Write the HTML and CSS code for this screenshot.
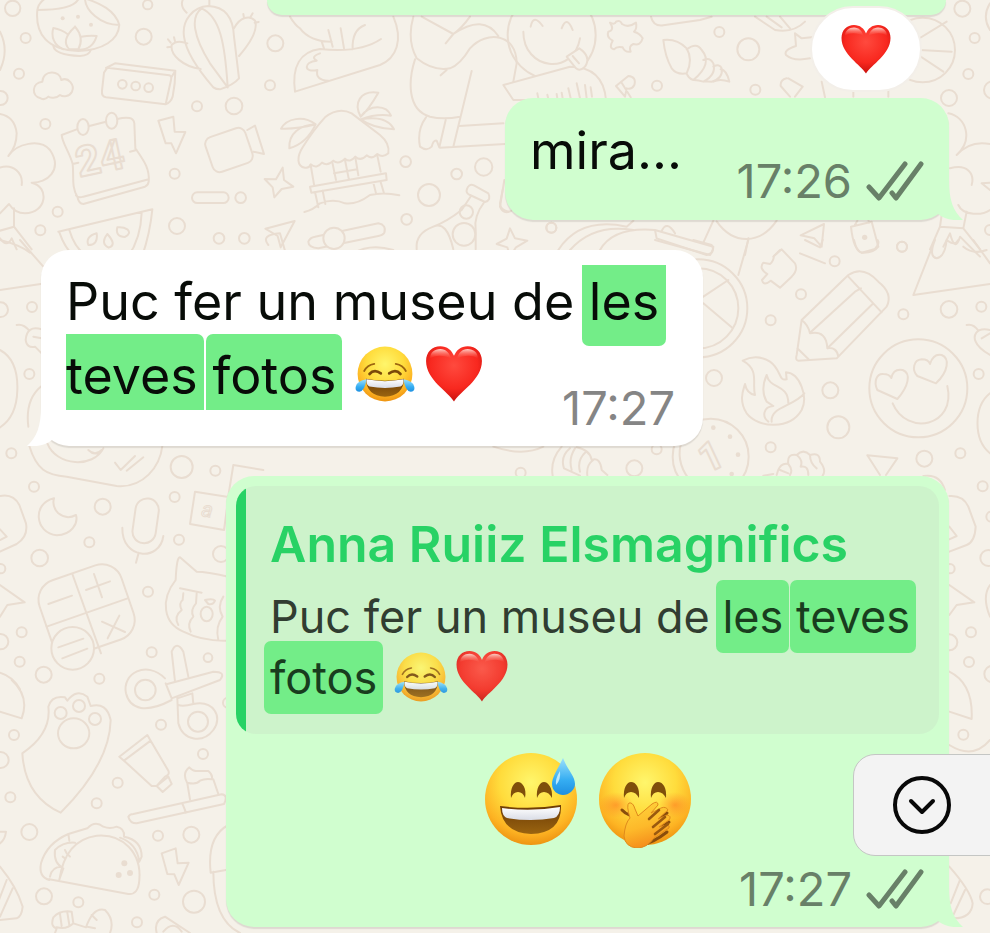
FILE: index.html
```html
<!DOCTYPE html>
<html lang="ca">
<head>
<meta charset="utf-8">
<meta name="viewport" content="width=device-width, initial-scale=1">
<title>Xat</title>
<link rel="stylesheet" href="styles.css">
</head>
<body>
<svg class="defs" aria-hidden="true">
  <defs>
    <radialGradient id="face" cx=".5" cy=".32" r=".68">
      <stop offset="0" stop-color="#fff66c"/><stop offset=".5" stop-color="#ffdc3c"/><stop offset=".82" stop-color="#fdb323"/><stop offset="1" stop-color="#ee9412"/>
    </radialGradient>
    <linearGradient id="mouth" x1="0" y1="0" x2="0" y2="1">
      <stop offset="0" stop-color="#6b3a05"/><stop offset="1" stop-color="#9a6410"/>
    </linearGradient>
    <linearGradient id="teeth" x1="0" y1="0" x2="0" y2="1">
      <stop offset="0" stop-color="#ffffff"/><stop offset="1" stop-color="#d9dce6"/>
    </linearGradient>
    <linearGradient id="drop" x1="0" y1="0" x2="0" y2="1">
      <stop offset="0" stop-color="#9be0fb"/><stop offset=".6" stop-color="#35adf2"/><stop offset="1" stop-color="#1e8fe0"/>
    </linearGradient>
    <radialGradient id="red" cx=".5" cy=".35" r=".65">
      <stop offset="0" stop-color="#ff4a3e"/><stop offset=".65" stop-color="#f8281f"/><stop offset="1" stop-color="#c8110d"/>
    </radialGradient>
    <linearGradient id="gloss" x1="0" y1="0" x2="0" y2="1">
      <stop offset="0" stop-color="#ffd9d2" stop-opacity=".95"/><stop offset="1" stop-color="#ff6a5a" stop-opacity="0"/>
    </linearGradient>
    <radialGradient id="blush"><stop offset="0" stop-color="#ff6a1e" stop-opacity=".5"/><stop offset="1" stop-color="#ff7a2a" stop-opacity="0"/></radialGradient>
    <linearGradient id="hand" x1="0" y1="0" x2=".3" y2="1">
      <stop offset="0" stop-color="#ffd63e"/><stop offset=".6" stop-color="#fdb92a"/><stop offset="1" stop-color="#f58f1c"/>
    </linearGradient>
    <symbol id="heart" viewBox="0 0 100 100">
      <path fill="url(#red)" d="M50 99C40 82 1 61 1 28C1 12 12 2 26 2C38 2 46 9 50 19C54 9 62 2 74 2C88 2 99 12 99 28C99 61 60 82 50 99Z"/>
      <path fill="url(#gloss)" d="M8 24C8 13 16 7 26 7C36 7 42 14 45 24C36 18 16 16 8 24ZM55 24C58 14 64 7 74 7C84 7 92 13 92 24C84 16 64 18 55 24Z"/>
    </symbol>
    <symbol id="joy" viewBox="0 0 100 94">
      <circle cx="50" cy="47" r="46" fill="url(#face)"/>
      <path d="M15 42Q20 32 32 30M85 42Q80 32 68 30" fill="none" stroke="#9c6510" stroke-width="3" stroke-linecap="round"/>
      <path d="M24 47Q32 38 43 46M57 46Q68 38 76 47" fill="none" stroke="#7b4a0a" stroke-width="4.5" stroke-linecap="round"/>
      <path fill="url(#mouth)" d="M18 55Q50 62 82 55Q81 84 50 85Q19 84 18 55Z"/>
      <path fill="url(#teeth)" d="M19 56Q50 62 81 56Q82 66 76 68Q50 73 24 68Q18 66 19 56Z"/>
      <path fill="url(#drop)" d="M19 56Q4 58 1 68Q-1 76 7 77Q16 76 19 56ZM81 56Q96 58 99 68Q101 76 93 77Q84 76 81 56Z"/>
    </symbol>
    <symbol id="sweat" viewBox="0 0 92 95">
      <circle cx="46" cy="46" r="46" fill="url(#face)"/>
      <path fill="#7f4f0b" d="M26 45C25 35 29 29 33 29C37 29 42 35 40 45Q38 39 33 39Q28 39 26 45ZM52 45C51 35 55 29 59 29C63 29 68 35 67 45Q64 39 59 39Q54 39 52 45Z"/>
      <path fill="url(#mouth)" d="M15 53Q46 57 76 52Q77 80 46 81Q17 80 15 53Z"/>
      <path fill="url(#teeth)" d="M17 55Q46 59 75 54Q75 63 69 65Q46 69 22 65Q17 63 17 55Z"/>
      <path fill="url(#drop)" d="M78 5C73 16 67 24 67 31C67 38 73 42 78 42C84 42 90 37 90 31C90 23 82 16 78 5Z"/>
      <path fill="#d8f5ff" opacity=".8" d="M75 18Q70 26 71 32Q76 27 75 18Z"/>
    </symbol>
    <symbol id="giggle" viewBox="0 0 92 95">
      <circle cx="46" cy="46" r="46" fill="url(#face)"/>
      <ellipse cx="17" cy="52" rx="17" ry="13" fill="url(#blush)"/><ellipse cx="76" cy="52" rx="16" ry="13" fill="url(#blush)"/>
      <path fill="#7f4f0b" d="M25 45C24 35 28 29 32 29C37 29 41 35 40 45Q37 39 32 39Q27 39 25 45ZM52 45C51 35 55 29 59 29C64 29 68 35 67 45Q64 39 59 39Q54 39 52 45Z"/>
      <path d="M23 57Q30 65 47 64M42 92Q54 90 68 79M68 60L54 72M70 69L54 80" stroke="#8a4d0c" stroke-width="3" stroke-linecap="round" fill="none"/>
      <path fill="url(#hand)" stroke="#e08a1c" stroke-width="1" d="M30 50Q34 49 36 56L39 63L53 51Q59 47 59 52L52 60L62 55Q67 53 69 57L59 66L68 62Q73 63 70 67L60 74Q72 70 70 75L55 85Q48 95 38 95Q26 94 25 83Q26 70 31 65Q27 52 30 50Z"/>
      <path d="M50 66L60 57M54 74L66 64M56 81L69 71" stroke="#9a590f" stroke-width="2.6" stroke-linecap="round"/>
    </symbol>
    <symbol id="ticks" viewBox="0 0 58 40">
      <path d="M3 26L13 37L39 3M26 32L30 37L55 3" fill="none" stroke="currentColor" stroke-width="5" stroke-linecap="round" stroke-linejoin="round"/>
    </symbol>
    <symbol id="tail" viewBox="0 0 30 40">
      <path d="M16 0C16 20 20 31 30 40C20 41 11 39 5 34L0 30V0Z" fill="currentColor"/>
    </symbol>
  </defs>
</svg>

<main class="chat">
  <svg class="wallpaper" viewBox="0 0 990 933" preserveAspectRatio="xMinYMin slice" aria-hidden="true">
    <!-- top left -->
    <g transform="scale(.33333)">
      <circle cx="38" cy="25" r="23"/><circle cx="77" cy="114" r="15"/><circle cx="57" cy="221" r="15"/><circle cx="443" cy="14" r="14"/><circle cx="431" cy="110" r="24"/><circle cx="826" cy="130" r="24"/><circle cx="810" cy="256" r="15"/><circle cx="591" cy="319" r="15"/><circle cx="702" cy="318" r="25"/><circle cx="136" cy="372" r="15"/><circle cx="524" cy="521" r="15"/><circle cx="173" cy="635" r="15"/><circle cx="121" cy="691" r="15"/><circle cx="531" cy="678" r="24"/><circle cx="657" cy="715" r="16"/><circle cx="733" cy="715" r="16"/><circle cx="722" cy="593" r="16"/><circle cx="2" cy="294" r="21"/>
      <path d="M0 95Q28 150 0 210"/>
      <path d="M112 30C105 100 140 150 235 153C310 150 355 120 358 75C345 30 300 10 255 -5C255 30 300 75 358 75M112 30C160 30 220 25 235 -2M112 30Q115 10 135 -4"/>
      <path d="M160 84C152 110 162 135 190 148M160 84Q185 88 205 104M225 80C195 108 190 130 208 148H235C250 120 238 95 225 80M243 110Q270 106 290 108C282 135 265 150 235 149M160 138Q165 165 240 168Q268 166 272 150"/>
      <circle class="dot" cx="188" cy="55" r="6"/><circle class="dot" cx="234" cy="50" r="6"/><circle class="dot" cx="273" cy="74" r="6"/>
      <path d="M122 295C93 288 95 248 127 245C130 208 180 210 184 240C205 230 225 255 216 275C208 290 190 292 180 285C170 295 150 295 145 290C138 298 128 298 122 295Z"/>
      <path d="M322 203L508 226Q516 228 513 240L497 313L318 292Q304 290 306 272L312 218ZM318 204L345 190L526 212L515 230M526 212Q526 250 518 290Q512 308 497 313"/>
      <circle cx="367" cy="253" r="13"/><circle cx="407" cy="258" r="13"/><circle cx="446" cy="263" r="13"/>
      <path d="M640 262Q560 170 552 110C545 60 580 20 625 18C680 20 700 60 702 110L717 235Q700 255 660 268Q648 268 640 262ZM605 25C570 50 580 110 630 190L683 262M605 25C660 50 675 130 683 262M562 130Q530 118 515 135C510 165 550 200 602 207M702 85C720 50 750 45 765 62C775 90 750 130 717 168M512 128L504 118M525 124L522 112M513 140L502 142M732 54L730 42M752 50L758 40M764 68L776 66M560 38Q540 20 548 0M628 0V18"/>
      <path d="M185 405L230 388M268 378L318 365M352 357Q400 345 403 370L406 445C430 480 450 505 446 545Q445 555 435 560L250 612Q236 612 232 590C214 560 222 530 218 492C208 455 187 430 185 405M228 586Q235 595 250 590L446 538M218 492L235 488M390 455L410 450"/>
      <ellipse cx="249" cy="381" rx="17" ry="24"/><ellipse cx="335" cy="362" rx="17" ry="24"/>
      <text class="day" x="238" y="532" transform="rotate(-12 238 532)">24</text>
      <path d="M475 362L520 350L524 395L556 396L528 460L514 430L497 430Z"/>
      <rect x="624" y="395" width="126" height="110" rx="22" transform="rotate(-19 687 450)"/>
      <path d="M742 390L765 377L792 462L760 455"/>
      <rect x="576" y="577" width="110" height="32" rx="16"/>
      <path d="M848 503L852 540L880 560L845 567L823 592L818 562L794 537L828 538Z"/>
      <path d="M0 342Q45 350 50 400Q50 440 25 468C50 430 120 415 150 450C190 510 140 550 95 548C150 560 140 640 75 640Q45 640 27 612L0 640M0 503C40 490 70 520 65 555M42 625V680L0 692M42 680L95 748M0 715Q20 745 35 715L50 748"/>
      <path d="M175 695L457 628Q450 700 426 770M178 697Q200 760 240 780M208 690Q225 750 270 775M425 638Q422 720 380 775M290 700Q255 710 265 735Q295 735 290 700ZM322 702Q300 730 326 743Q352 735 322 702ZM352 682Q345 710 375 711Q395 700 382 688Q370 680 352 682Z"/>
      <path d="M796 686L884 663L842 742L833 708Z"/>
    </g>
    <!-- upper middle -->
    <g transform="translate(270) scale(.33333)">
      <circle cx="477" cy="585" r="33"/><circle cx="407" cy="485" r="16"/><circle cx="560" cy="522" r="16"/><circle cx="641" cy="501" r="26"/><circle cx="410" cy="658" r="16"/><circle cx="844" cy="683" r="15"/>
      <path d="M60 50Q75 75 90 85Q120 125 185 125M155 125L162 145M175 90L188 140M212 85L222 145M285 75Q245 90 248 148M75 275C65 200 90 155 150 147Q270 160 333 117M75 275L330 195C380 175 400 120 370 50M150 160Q120 170 140 182C100 185 100 220 142 210Q135 240 175 242"/>
      <path d="M105 503C80 500 80 470 98 442Q130 390 165 352Q205 320 245 340L330 405Q360 430 355 460Q338 475 322 462Q305 480 290 466Q272 485 256 470Q240 490 225 476Q205 495 190 482Q172 500 156 488Q140 508 122 493Q118 505 105 503Z"/>
      <path d="M137 373C100 345 50 355 33 386Q80 388 137 373C90 375 55 400 58 445Q110 430 137 373M272 350C250 310 270 270 325 278Q295 330 272 350C300 310 350 315 363 347Q320 340 272 358C320 350 355 355 372 388Q310 385 272 358M122 495L132 553M187 487L198 540M225 480L236 535M256 472L265 526M322 467L332 515M192 520L262 508M120 560L348 520L350 540L124 578ZM135 576L145 622M158 572L166 612M310 548L318 580M332 546L342 580M103 636Q130 630 150 610Q190 595 225 610Q260 615 300 585Q340 575 388 586"/>
      <path d="M430 50Q410 120 440 175Q490 215 540 205Q570 195 600 145C650 90 740 100 740 190L730 245M455 50L550 102L527 130M600 50Q575 85 550 102Q640 40 685 108M435 178C415 240 410 330 480 350Q520 360 570 350M605 213L550 440M568 378L700 370M510 443L705 432M527 360L508 442L500 422Q490 420 485 440Q470 455 450 440Q440 390 468 352M512 226L530 210"/>
      <path d="M590 570Q595 550 612 556L655 580Q665 600 645 606L600 585Q588 580 590 570ZM603 588L575 630Q530 665 490 680Q435 700 440 748M643 606Q610 650 617 690V748M490 680Q530 660 550 748"/><circle cx="589" cy="636" r="20"/><circle cx="582" cy="703" r="34"/>
      <path d="M720 685L735 715L772 722L738 742L720 770L712 742L680 732L710 716ZM703 540L690 620Q700 645 725 632"/>
      <path d="M135 710L325 670Q350 675 343 698Q340 705 325 708L145 745Q115 742 115 725Q120 712 135 710ZM250 760Q300 730 370 750"/><circle class="paper" cx="192" cy="715" r="32"/>
      <path d="M-5 735Q-30 705 30 700L50 770"/>
    </g>
    <!-- top right -->
    <g transform="translate(500) scale(.33333)">
      <circle cx="155" cy="105" r="132"/>
      <path class="paper" d="M20 270L10 255L210 200Q310 200 318 300H40Z"/>
      <path d="M92 80Q100 40 128 78M185 85Q200 45 218 90M70 95C70 210 220 230 240 115"/>
      <path class="paper" d="M200 170L238 145Q275 170 255 200Q240 215 228 205Z"/>
      <path d="M218 168L237 190M115 295L112 280M145 297L142 284M172 295L170 282M188 295L185 278M212 295L205 265M240 295L230 250M260 295L255 255M276 290L272 262"/>
      <path d="M330 68Q345 75 348 65Q360 58 366 72Q385 85 408 68Q412 85 402 95Q420 100 428 115Q422 138 400 132Q385 138 392 155Q375 158 368 142Q350 138 342 148Q325 145 338 122Q318 112 325 95Q345 90 330 68Z"/>
      <path d="M453 50Q460 80 490 76L600 60L635 50M490 120Q495 170 515 205Q530 225 560 220Q580 180 560 145Q530 115 490 120ZM560 148Q590 125 605 150Q640 190 580 240Q565 235 560 220M610 180Q630 170 640 190Q650 225 610 245Q595 240 582 240M640 200Q660 190 665 205Q670 235 635 245L612 244M662 208Q680 210 688 245Q660 235 640 245"/>
      <circle cx="658" cy="96" r="15"/><circle cx="745" cy="148" r="33"/><circle cx="471" cy="257" r="15"/><circle cx="766" cy="269" r="15"/><circle cx="1387" cy="26" r="24"/><circle cx="1424" cy="114" r="15"/><circle cx="1405" cy="222" r="15"/><circle cx="1347" cy="294" r="24"/><circle cx="1268" cy="150" r="97"/><circle cx="1206" cy="740" r="15"/><circle cx="154" cy="683" r="15"/><circle cx="1478" cy="270" r="26"/>
      <path d="M1470 10Q1445 50 1470 90M765 50L825 90Q880 100 915 65M800 50L845 82M840 50L870 85M885 100L905 115L935 112M885 100L888 138Q850 150 858 165Q880 185 930 175M1250 120L1340 65M1260 150L1355 155M1255 165L1330 215"/>
      <path d="M348 258L385 228Q410 230 403 255Q395 270 380 265L375 290M348 258L375 290M365 248L392 292M860 235Q840 240 842 258L870 290M865 235L908 260M908 260L885 290M965 245L975 292M1060 270V290M1165 270V290"/>
      <path d="M1345 340C1400 350 1420 420 1370 465Q1410 420 1470 432M1350 505C1400 490 1425 520 1415 555M1470 548L1445 550L1470 570M1375 615C1390 650 1450 645 1470 630M1325 645L1320 680L1290 748M1320 680L1390 685L1400 635M1390 685L1440 748M1330 740L1350 700Q1365 760 1380 710L1440 770"/>
      <path d="M175 750Q240 650 380 680L400 662M210 750Q280 670 400 690M300 750Q340 680 465 690L640 740Q640 760 620 765L470 715L465 690M640 662L610 728M485 693Q500 660 525 700M650 664C700 735 780 735 830 662M745 715L735 765M902 706L972 672L965 740L943 715ZM1053 680L1115 665L1135 740Q1120 760 1085 758Q1060 750 1053 680ZM1063 678L1072 662M1108 668L1105 660"/><circle class="dot" cx="1094" cy="712" r="8"/><circle cx="1470" cy="690" r="15"/>
      <path d="M8 570L0 610Q0 630 25 635M840 750L820 770M900 760L975 790"/>
    </g>
    <!-- left edge -->
    <g transform="translate(0 240) scale(.33333)">
      <path d="M0 0Q60 15 90 38M60 0L130 80M0 150L122 132"/><circle cx="2" cy="209" r="22"/><circle cx="96" cy="201" r="15"/><circle cx="88" cy="402" r="15"/><circle cx="34" cy="640" r="15"/>
      <path d="M50 255Q70 250 88 272M125 268Q80 255 77 300Q80 325 105 320L125 340M100 290L125 295M0 330Q55 360 52 450Q50 530 0 562M122 440Q75 480 85 560"/>
    </g>
    <!-- right side -->
    <g transform="translate(480 240) scale(.33333)">
      <circle cx="655" cy="205" r="147"/><circle cx="655" cy="205" r="120"/><path d="M670 170L745 120M670 190L755 262M805 0L775 105M525 0L690 45Q705 30 695 15L640 0M975 0L1020 22L1028 0M1122 0Q1130 35 1145 38L1185 27Q1200 10 1193 0"/>
      <circle cx="1064" cy="64" r="15"/><circle cx="963" cy="163" r="15"/><circle cx="872" cy="241" r="15"/><circle cx="1266" cy="20" r="15"/><circle cx="1270" cy="223" r="15"/><circle cx="1407" cy="208" r="25"/><circle cx="1504" cy="200" r="15"/><circle cx="1496" cy="402" r="15"/><circle cx="702" cy="414" r="24"/><circle cx="1051" cy="451" r="24"/><circle cx="1075" cy="562" r="33"/><circle cx="872" cy="622" r="15"/><circle cx="1333" cy="656" r="24"/><circle cx="1441" cy="640" r="15"/><circle cx="463" cy="685" r="24"/><circle cx="530" cy="628" r="15"/><circle cx="122" cy="698" r="15"/>
      <path d="M905 28L945 70Q955 90 935 110L900 143L872 122Q850 140 846 120L862 102Q835 85 850 68L870 72Q880 65 882 48Z"/>
      <path d="M965 240L1105 105Q1150 75 1195 125Q1240 160 1220 200L1070 355L955 362Q945 360 950 345ZM965 240Q985 255 990 280Q1040 270 1042 325Q1070 320 1075 350M1105 110L1205 217M990 278L1125 155M1042 325L1180 190M952 325L988 360M1125 155L1143 145"/>
      <path d="M1365 0L1300 165L1530 132M1365 0Q1345 50 1370 55Q1395 50 1400 0Q1425 20 1435 0M1480 0L1530 70M1450 20Q1480 45 1520 30M1460 255Q1480 250 1495 272M1530 270C1485 260 1480 290 1487 305Q1495 325 1530 345M1505 295L1530 280"/>
      <path d="M788 362Q830 340 870 365C905 390 895 425 920 418L918 397C960 400 985 470 965 510C930 570 835 565 800 520C775 480 790 450 795 432Q800 460 825 465C815 430 840 390 788 362ZM860 405Q840 450 860 485L880 498C850 500 845 530 865 545M860 405C870 450 925 430 925 490M875 545C870 500 940 500 973 460"/>
      <circle cx="1315" cy="445" r="147"/>
      <path d="M1252 477L1192 450C1180 425 1190 400 1210 402Q1228 402 1234 414Q1240 385 1268 390C1295 400 1285 440 1252 477ZM1368 430L1312 408C1295 390 1300 360 1325 358Q1345 358 1350 372Q1360 340 1385 345C1410 355 1405 395 1368 430ZM1238 490C1280 590 1430 560 1402 438"/>
      <path d="M1530 460C1480 500 1480 600 1530 640M1162 646L1252 655L1218 705M1162 646L1200 705"/>
      <circle cx="692" cy="650" r="114"/><path d="M606 600Q585 660 625 715"/>
      <text class="hour" x="658" y="692" transform="rotate(-25 690 650)">1</text>
      <circle class="dot" cx="700" cy="563" r="7"/><circle class="dot" cx="750" cy="590" r="7"/><circle class="dot" cx="774" cy="644" r="7"/><circle class="dot" cx="755" cy="702" r="7"/>
      <path d="M890 705Q900 665 925 672Q920 640 950 645Q970 625 990 645Q1020 635 1020 665Q1040 690 1028 707M925 672Q940 690 930 705M950 645Q970 660 962 680Q985 675 985 705M990 645Q990 670 1010 685M900 690L925 700M850 707L880 702M40 620Q130 650 190 620M245 620Q210 660 218 707M290 622Q330 630 335 660Q360 650 365 690L382 705M270 625Q240 650 252 685L300 707M285 625Q265 655 275 690M318 635Q290 660 300 695M340 660Q318 675 322 707"/>
    </g>
    <!-- middle left -->
    <g transform="translate(0 440) scale(.33333)">
      <circle cx="102" cy="140" r="15"/><circle cx="545" cy="81" r="33"/><circle cx="646" cy="92" r="15"/><circle cx="524" cy="171" r="15"/><circle cx="308" cy="200" r="24"/><circle cx="268" cy="307" r="15"/><circle cx="119" cy="354" r="25"/><circle cx="537" cy="299" r="15"/><circle cx="663" cy="342" r="24"/><circle cx="444" cy="455" r="15"/><circle cx="65" cy="577" r="15"/><circle cx="2" cy="605" r="23"/><circle cx="59" cy="665" r="15"/><circle cx="131" cy="704" r="24"/><circle cx="298" cy="716" r="15"/><circle cx="455" cy="637" r="15"/><circle cx="624" cy="653" r="13"/><circle cx="2" cy="386" r="14"/>
      <path d="M88 18C110 90 140 105 200 110L350 138C430 145 480 80 487 18M142 10C170 80 280 85 310 25M265 30Q285 50 305 30M345 68L362 90L405 48M380 92L430 52"/>
      <path d="M0 168Q40 160 58 195L78 250Q85 290 50 312L0 335M0 268L20 290L0 300M0 435L74 487L22 495L0 530M0 698Q40 710 60 748"/>
      <path d="M162 175C95 190 105 280 170 286C215 285 235 250 228 225Q200 240 175 220Q155 200 162 175Z"/>
      <rect x="402" y="175" width="70" height="135" rx="35" transform="rotate(8 437 242)"/><path d="M367 263C365 360 480 365 490 288M416 338L408 368"/>
      <path d="M700 75L790 90M700 75L683 180M585 155L690 172M585 155L570 252L672 270L685 175"/>
      <text class="letter" x="602" y="228" transform="rotate(8 600 230)">a</text>
      <rect x="130" y="392" width="260" height="235" rx="62" transform="rotate(-19 260 510)"/><path d="M217 402L303 640M140 560L383 475M145 492L216 467M258 450L330 424M282 402L306 472M306 545L375 576M358 527L323 595"/>
      <circle class="paper" cx="218" cy="625" r="64"/><path d="M175 622L250 596M187 655L262 626"/>
      <path d="M685 410Q620 395 590 395L540 352Q530 350 527 420C480 480 490 550 550 575Q610 605 685 602M540 445L605 458M550 460L548 480Q535 490 545 510Q520 530 535 555M590 460L588 490Q570 510 580 530Q560 550 572 575M615 480Q640 475 645 482Q640 495 625 492ZM670 470Q650 500 668 530Q645 560 655 600"/><ellipse cx="620" cy="522" rx="18" ry="22"/>
    </g>
    <!-- bottom left -->
    <g transform="translate(0 680) scale(.33333)">
      <path d="M525 4L515 -85Q530 -120 550 -85L565 -10M502 12L640 -25Q680 -25 660 0L515 55M497 10L515 55M495 -5C440 -60 365 -20 378 40C390 90 440 100 515 60M532 55L577 40L580 72M532 55L535 130C550 185 610 190 640 150C670 110 640 60 580 72Q550 80 535 75"/><circle cx="436" cy="30" r="31"/><circle cx="594" cy="125" r="30"/>
      <circle cx="42" cy="165" r="15"/><circle cx="2" cy="240" r="24"/><circle cx="31" cy="352" r="15"/><circle cx="88" cy="456" r="24"/><circle cx="290" cy="370" r="15"/><circle cx="353" cy="308" r="15"/><circle cx="483" cy="134" r="15"/><circle cx="609" cy="222" r="15"/><circle cx="474" cy="467" r="15"/><circle cx="574" cy="464" r="24"/><circle cx="463" cy="644" r="15"/><circle cx="582" cy="665" r="33"/><circle cx="132" cy="649" r="24"/><circle cx="235" cy="667" r="15"/><circle cx="411" cy="727" r="15"/><circle cx="684" cy="68" r="15"/>
      <path d="M35 0Q90 50 65 115L0 95M0 455L18 455Q15 480 0 490M0 560Q50 620 68 680Q65 710 50 715L0 720M20 600L-5 665M38 625L0 710"/>
      <path d="M67 220Q155 160 145 80Q155 45 195 52L202 62Q230 25 262 50L272 78Q320 65 332 120C330 220 260 320 182 398Q75 350 67 220Z"/><circle cx="182" cy="99" r="18"/><circle cx="237" cy="78" r="18"/><circle cx="285" cy="117" r="18"/><ellipse cx="221" cy="160" rx="47" ry="45"/>
      <path d="M358 230L442 165L452 182L372 242ZM452 182L505 272Q510 285 495 290L470 318L455 318L372 242M470 318L505 290L515 312L488 336ZM400 402L665 343Q685 345 672 372L410 430Q390 430 385 410Q390 402 400 402ZM547 370L558 398M562 310L570 358M640 298L655 342M562 310Q545 280 568 262Q580 275 590 273H625Q640 285 635 298Q615 295 600 302Q590 315 562 308"/>
      <path d="M148 600Q115 590 123 550Q140 490 205 462L262 445Q285 420 310 440Q330 448 350 440Q375 445 372 470Q425 480 425 530L418 545M178 600Q195 480 290 467C370 460 425 520 418 600Q415 645 385 642L148 598M205 462L208 482M360 473Q410 490 418 545M178 598L190 565Q160 550 165 510Q190 485 225 488M150 590Q155 560 185 560"/>
      <circle class="dot" cx="373" cy="550" r="9"/><circle class="dot" cx="390" cy="579" r="9"/><circle class="dot" cx="356" cy="585" r="9"/>
      <path d="M195 510L200 520M188 530L195 535M205 525L210 530M485 520L527 505L533 550L566 548L536 615L523 583L502 582Z"/>
      <path d="M160 712Q150 740 170 745M160 712Q180 690 215 695L220 730Q200 750 170 742M180 702L185 738M202 698L208 735M170 745L165 759M220 730L258 742Q280 680 315 690Q345 720 330 759M275 705L290 720M262 740L285 745M470 759Q460 720 495 710L570 759M490 755Q520 720 545 755M685 435Q620 470 632 578L690 568M640 575Q640 720 720 759"/>
    </g>
    <!-- lower right -->
    <g transform="translate(580 470) scale(.33333)">
      <circle cx="1208" cy="49" r="15"/><circle cx="1110" cy="296" r="14"/><circle cx="1225" cy="264" r="24"/><circle cx="1173" cy="487" r="15"/><circle cx="1167" cy="576" r="15"/><circle cx="1108" cy="517" r="24"/><circle cx="1238" cy="612" r="25"/><circle cx="1150" cy="794" r="15"/><circle cx="1234" cy="140" r="15"/>
      <path d="M1030 18Q1080 10 1095 60M1108 78Q1150 75 1165 110L1187 170Q1185 215 1160 225L1108 245M1108 170L1130 198L1108 208M1108 345L1183 397L1130 405L1108 435M1108 605Q1180 640 1175 747L1108 725M1230 345Q1205 380 1230 440M1108 825Q1180 870 1230 810"/>
      <path d="M1108 1190Q1170 1260 1178 1300Q1175 1345 1120 1345M1140 1230L1112 1300M1155 1260L1120 1335"/><circle cx="1222" cy="1280" r="22"/>
    </g>
  </svg>

  <article class="bubble out previous">
    <span class="reaction"><svg class="reaction-heart" role="img" aria-label="❤️"><use href="#heart"/></svg></span>
  </article>

  <article class="bubble out short">
    <p class="text">mira...</p>
    <footer class="meta"><time>17:26</time><svg class="ticks" role="img" aria-label="Lliurat"><use href="#ticks"/></svg></footer>
    <svg class="tail" aria-hidden="true"><use href="#tail"/></svg>
  </article>

  <article class="bubble in">
    <p class="text">Puc fer un museu de <mark class="upper">les</mark><br><mark class="lower first">teves</mark> <mark class="lower">fotos</mark> <svg class="emoji joy" role="img" aria-label="😂"><use href="#joy"/></svg><svg class="emoji heart" role="img" aria-label="❤️"><use href="#heart"/></svg></p>
    <footer class="meta"><time>17:27</time></footer>
    <svg class="tail" aria-hidden="true"><use href="#tail"/></svg>
  </article>

  <article class="bubble out reply">
    <blockquote class="quote">
      <h2 class="author">Anna Ruiiz Elsmagnifics</h2>
      <p class="quoted">Puc fer un museu de <mark>les</mark> <mark>teves</mark><br><mark>fotos</mark> <svg class="emoji joy" role="img" aria-label="😂"><use href="#joy"/></svg><svg class="emoji heart" role="img" aria-label="❤️"><use href="#heart"/></svg></p>
    </blockquote>
    <p class="big"><svg class="large" role="img" aria-label="😅"><use href="#sweat"/></svg><svg class="large" role="img" aria-label="🤭"><use href="#giggle"/></svg></p>
    <footer class="meta"><time>17:27</time><svg class="ticks" role="img" aria-label="Lliurat"><use href="#ticks"/></svg></footer>
    <svg class="tail" aria-hidden="true"><use href="#tail"/></svg>
  </article>

  <button class="scroll-down" type="button" aria-label="Ves al final">
    <svg viewBox="0 0 60 60" aria-hidden="true"><circle cx="30" cy="30" r="27"/><path d="M19 26L30 37L41 26"/></svg>
  </button>
</main>
</body>
</html>
```

FILE: styles.css
```css
* { box-sizing: border-box; }

body {
  margin: 0;
  background: #f5f1e9;
  font-family: Inter, "Liberation Sans", sans-serif;
  color: #080c08;
}

p, h2, blockquote { margin: 0; }

.defs { position: absolute; width: 0; height: 0; }

.chat {
  position: relative;
  display: flex;
  flex-direction: column;
  gap: 30px;
  min-height: 100vh;
  padding: 0 41px 5px;
  overflow: hidden;
}

.wallpaper {
  position: absolute;
  inset: 0;
  width: 100%;
  height: 100%;
  fill: none;
  stroke: #e9ddd1;
  stroke-width: 6;
  stroke-linecap: round;
  stroke-linejoin: round;
}
.wallpaper .dot { fill: #e9ddd1; stroke: none; }
.wallpaper .paper { fill: #f5f1e9; }
.wallpaper text { font-family: Roboto, sans-serif; }
.wallpaper .day { font-size: 126px; font-weight: 700; }
.wallpaper .hour { font-size: 120px; font-weight: 700; }
.wallpaper .letter { font-size: 64px; font-style: italic; stroke-width: 3; }

.bubble {
  position: relative;
  border-radius: 28px;
  box-shadow: 0 2px 1px rgba(60, 50, 40, .12);
  white-space: nowrap;
}
.out { align-self: flex-end; background: #d0fecf; color: #080c08; }
.in { align-self: flex-start; background: #fff; }

.previous {
  width: 679px;
  max-width: 100%;
  height: 15px;
  margin: 0 3px 53px 0;
  border-radius: 0 0 28px 28px;
}
.reaction {
  position: absolute;
  top: 6px;
  right: 24px;
  display: grid;
  place-items: center;
  width: 112px;
  height: 86px;
  border: 2px solid #f3efe9;
  border-radius: 43px;
  background: #fff;
}
.reaction-heart { width: 50px; height: 50px; }

.tail {
  position: absolute;
  right: -14px;
  bottom: 0;
  width: 30px;
  height: 40px;
  color: #d0fecf;
}
.in .tail { right: auto; left: -14px; color: #fff; transform: scaleX(-1); }

.text { font-size: 52px; line-height: 74px; }

.meta {
  display: flex;
  align-items: center;
  gap: 14px;
  font-size: 47px;
  line-height: 50px;
  color: #688068;
}
.in .meta { color: #858585; }
.ticks { width: 58px; height: 40px; }

.short {
  display: flex;
  justify-content: space-between;
  align-items: flex-end;
  width: 444px;
  height: 122px;
  padding: 16px 25px 14px;
}
.short .text { align-self: flex-start; }

.in {
  display: grid;
  width: 662px;
  padding: 15px 28px 13px 25px;
}
.in .text, .in .meta { grid-area: 1 / 1; }
.in .text { padding-bottom: 20px; }
.in .meta { place-self: end; }

mark {
  display: inline-block;
  background: #73ed88;
  color: inherit;
  border-radius: 7px;
}
.text mark { margin: 0 -7px; padding: 0 7px; }
.text .upper { height: 81px; margin-bottom: -7px; border-radius: 0 0 7px 7px; }
.text .lower {
  margin: -8px -6px 0;
  padding: 8px 6px 0;
  line-height: 68px;
  border-radius: 7px 7px 0 0;
}
.text .first { margin-left: 0; padding-left: 0; border-top-left-radius: 0; }

.emoji { display: inline-block; }
.joy { margin-left: 4px; }
.text .emoji { vertical-align: -8px; }
.text .joy { width: 60px; height: 56px; }
.text .heart { width: 58px; height: 57px; margin-left: 10px; }

.reply { width: 723px; padding: 10px; }
.quote {
  height: 248px;
  padding: 26px 24px 0 34px;
  border-radius: 20px;
  background: linear-gradient(to right, #28d265 10px, #cdf3cb 10px);
}
.author { font-size: 50px; line-height: 64px; font-weight: 600; color: #28d265; }
.quoted { padding-top: 10px; font-size: 45px; line-height: 61px; color: #313d31; }
.quoted mark { height: 73px; margin: -6px; padding: 6px; color: #193d1e; }
.quoted .emoji { vertical-align: -8px; opacity: .9; }
.quoted .joy { width: 54px; height: 50px; }
.quoted .heart { width: 52px; height: 52px; margin-left: 8px; }

.big { display: flex; justify-content: center; gap: 22px; padding-top: 19px; }
.large { width: 92px; height: 95px; }
.reply .meta { justify-content: flex-end; margin: 16px 15px 3px; }

.scroll-down {
  position: absolute;
  top: 754px;
  right: -1px;
  width: 138px;
  height: 102px;
  padding: 0;
  border: 1px solid #c4c6c4;
  border-radius: 22px 0 0 22px;
  background: #f3f3f3;
}
.scroll-down svg { display: block; width: 60px; height: 60px; margin-left: 38px; }
.scroll-down circle, .scroll-down path {
  fill: none;
  stroke: #080808;
  stroke-width: 4;
  stroke-linecap: round;
  stroke-linejoin: round;
}
```
